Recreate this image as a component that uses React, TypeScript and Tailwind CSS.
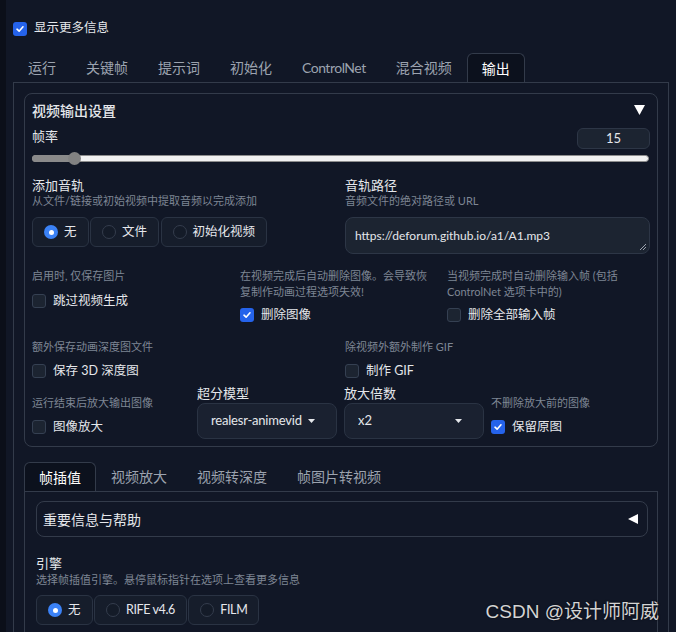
import React from "react";

const BORDER = "border-[#333b4a]";

function Check({ checked, label }: { checked?: boolean; label: string }) {
  return (
    <div className="flex items-center gap-[7px] h-[18px]">
      {checked ? (
        <span className="w-[14px] h-[14px] rounded-[3px] bg-[#2563eb] flex items-center justify-center">
          <svg width="10" height="10" viewBox="0 0 10 10">
            <path d="M2 5.2 L4.1 7.2 L8 2.8" fill="none" stroke="white" strokeWidth="1.6" strokeLinecap="round" strokeLinejoin="round" />
          </svg>
        </span>
      ) : (
        <span className="w-[14px] h-[14px] rounded-[3px] bg-[#1c2431] border border-[#354052]" />
      )}
      <span className="text-[12.5px] leading-[18px] text-[#e5e7eb]">{label}</span>
    </div>
  );
}

function Radios({ options, selected }: { options: string[]; selected: string }) {
  return (
    <div className="flex gap-[1.5px]">
      {options.map((o) => (
        <div
          key={o}
          className="h-[30px] flex items-center gap-[6px] px-[11px] rounded-md border border-[#2a3343] bg-[#161d2b]"
        >
          {o === selected ? (
            <span className="w-[14px] h-[14px] rounded-full bg-[#3b82f6] flex items-center justify-center">
              <span className="w-[5px] h-[5px] rounded-full bg-white" />
            </span>
          ) : (
            <span className="w-[14px] h-[14px] rounded-full bg-[#141b28] border border-[#343d4d]" />
          )}
          <span className={`text-[12.5px] text-[#e5e7eb] ${/[A-Za-z]/.test(o) ? "tracking-[-0.4px]" : ""}`}>{o}</span>
        </div>
      ))}
    </div>
  );
}

function Tabs({ items, active }: { items: string[]; active: string }) {
  return (
    <div className="flex">
      {items.map((t) =>
        t === active ? (
          <div
            key={t}
            className={`relative z-10 -mb-px h-[29px] px-[14px] flex items-center text-[14px] text-white bg-[#0c111d] border border-b-0 ${BORDER} rounded-t-md`}
          >
            {t}
          </div>
        ) : (
          <div
            key={t}
            className={`h-[29px] px-[14px] flex items-center text-[14px] text-[#9ca3af] border border-transparent ${
              t === "ControlNet" ? "tracking-[-0.5px]" : ""
            }`}
          >
            {t}
          </div>
        )
      )}
    </div>
  );
}

function Info({ children }: { children: React.ReactNode }) {
  return <div className="text-[11px] leading-[16px] text-[#7e8694]">{children}</div>;
}

function Label({ children }: { children: React.ReactNode }) {
  return <div className="text-[13px] leading-[16px] text-[#e5e7eb]">{children}</div>;
}

function Caret() {
  return (
    <svg width="7" height="4" viewBox="0 0 7 4">
      <path d="M0 0 L7 0 L3.5 4 Z" fill="#e5e7eb" />
    </svg>
  );
}

function Dropdown({ value, clip }: { value: string; clip?: boolean }) {
  return (
    <div className="mt-px h-[36px] rounded-lg border border-[#2a3343] bg-[#1a2130] flex items-center justify-between pl-[13px] pr-[21px]">
      <span className={`text-[13px] text-[#e5e7eb] whitespace-nowrap overflow-hidden ${clip ? "w-[91px] tracking-[-0.2px]" : ""}`}>{value}</span>
      <Caret />
    </div>
  );
}

export default function App() {
  return (
    <div className="relative w-full h-[632px] overflow-hidden bg-[#111726] border-l-[6px] border-[#0b0f19] px-[7px] pt-[21px] font-['Lato','Noto_Sans_CJK_SC',sans-serif]">
      <div className="flex items-center gap-[7px] h-[15px]">
        <span className="w-[14px] h-[14px] rounded-[3px] bg-[#2563eb] flex items-center justify-center">
          <svg width="10" height="10" viewBox="0 0 10 10">
            <path d="M2 5.2 L4.1 7.2 L8 2.8" fill="none" stroke="white" strokeWidth="1.6" strokeLinecap="round" strokeLinejoin="round" />
          </svg>
        </span>
        <span className="text-[12.5px] text-[#e5e7eb]">显示更多信息</span>
      </div>

      <div className="mt-[17px]">
        <Tabs items={["运行", "关键帧", "提示词", "初始化", "ControlNet", "混合视频", "输出"]} active="输出" />
      </div>

      <div className={`border ${BORDER} p-[10px]`}>
        {/* 视频输出设置 */}
        <div className={`rounded-lg border ${BORDER} px-[7px] pt-[6px] pb-[7px]`}>
          <div className="flex items-center justify-between h-[20px]">
            <span className="text-[14px] font-medium text-[#e5e7eb]">视频输出设置</span>
            <svg width="11" height="10" viewBox="0 0 11 10" className="mr-[5px]">
              <path d="M0 0 L11 0 L5.5 10 Z" fill="white" />
            </svg>
          </div>

          <div className="mt-[7px] flex justify-between items-start">
            <span className="text-[13px] leading-[18px] text-[#e5e7eb]">帧率</span>
            <div className="mt-px w-[73px] h-[21px] rounded-md bg-[#1c2431] border border-[#2d3646] text-center text-[13px] leading-[19px] text-[#e5e7eb]">
              15
            </div>
          </div>

          <div className="relative mt-[6px] h-[7px] mr-px">
            <div className="absolute inset-0 rounded-full bg-[#f1f1f1] border border-[#8d8d8d]" />
            <div className="absolute left-0 top-0 h-full w-[42px] rounded-l-full bg-[#8a8a8a]" />
            <div className="absolute left-[36px] top-[-3px] w-[13px] h-[13px] rounded-full bg-[#828282]" />
          </div>

          <div className="mt-[15px] grid grid-cols-2 gap-x-[8px]">
            <div>
              <Label>添加音轨</Label>
              <Info>从文件/链接或初始视频中提取音频以完成添加</Info>
              <div className="mt-[8px]">
                <Radios options={["无", "文件", "初始化视频"]} selected="无" />
              </div>
            </div>
            <div>
              <Label>音轨路径</Label>
              <Info>音频文件的绝对路径或 URL</Info>
              <div className="relative mt-[8px] h-[37px] rounded-lg bg-[#1c2431] border border-[#2d3646] px-[9px] text-[12px] leading-[35px] text-[#e5e7eb]">
                https://deforum.github.io/a1/A1.mp3
                <svg width="6" height="6" viewBox="0 0 6 6" className="absolute right-[3px] bottom-[3px]">
                  <path d="M6 0 L0 6 M6 3 L3 6" stroke="#9ca3af" strokeWidth="1" />
                </svg>
              </div>
            </div>
          </div>

          <div className="mt-[14px] grid grid-cols-[198px_197px_1fr] gap-x-[10px]">
            <div>
              <Info>启用时, 仅保存图片</Info>
              <div className="mt-[8px]">
                <Check label="跳过视频生成" />
              </div>
            </div>
            <div>
              <Info>在视频完成后自动删除图像。会导致恢复制作动画过程选项失效!</Info>
              <div className="mt-[6px]">
                <Check checked label="删除图像" />
              </div>
            </div>
            <div>
              <Info>当视频完成时自动删除输入帧 (包括 ControlNet 选项卡中的)</Info>
              <div className="mt-[6px]">
                <Check label="删除全部输入帧" />
              </div>
            </div>
          </div>

          <div className="mt-[15px] grid grid-cols-2 gap-x-[8px]">
            <div>
              <Info>额外保存动画深度图文件</Info>
              <div className="mt-[7px]">
                <Check label="保存 3D 深度图" />
              </div>
            </div>
            <div>
              <Info>除视频外额外制作 GIF</Info>
              <div className="mt-[7px]">
                <Check label="制作 GIF" />
              </div>
            </div>
          </div>

          <div className="mt-[4px] grid grid-cols-[158px_140px_140px_1fr] gap-x-[7px] items-start">
            <div className="pt-[11px]">
              <Info>运行结束后放大输出图像</Info>
              <div className="mt-[7px]">
                <Check label="图像放大" />
              </div>
            </div>
            <div>
              <div className="text-[13px] leading-[18px] text-[#e5e7eb]">超分模型</div>
              <Dropdown value="realesr-animevideov3" clip />
            </div>
            <div>
              <div className="text-[13px] leading-[18px] text-[#e5e7eb]">放大倍数</div>
              <Dropdown value="x2" />
            </div>
            <div className="pt-[11px]">
              <Info>不删除放大前的图像</Info>
              <div className="mt-[7px]">
                <Check checked label="保留原图" />
              </div>
            </div>
          </div>
        </div>

        {/* 帧插值 tabs */}
        <div className="mt-[15px]">
          <Tabs items={["帧插值", "视频放大", "视频转深度", "帧图片转视频"]} active="帧插值" />
        </div>
        <div className={`border ${BORDER} pt-[9px] pl-[11px] pr-[9px] pb-[12px]`}>
          <div className={`h-[36px] rounded-lg border ${BORDER} flex items-center justify-between pl-[6px] pr-[9px]`}>
            <span className="text-[14px] text-[#e5e7eb]">重要信息与帮助</span>
            <svg width="10" height="10" viewBox="0 0 10 10">
              <path d="M10 0 L10 10 L0 5 Z" fill="white" />
            </svg>
          </div>
          <div className="mt-[17px]">
            <div className="text-[13px] leading-[18px] text-[#e5e7eb]">引擎</div>
            <Info>选择帧插值引擎。悬停鼠标指针在选项上查看更多信息</Info>
            <div className="mt-[7px]">
              <Radios options={["无", "RIFE v4.6", "FILM"]} selected="无" />
            </div>
          </div>
        </div>
      </div>

      <div className="absolute right-[17px] bottom-[10px] text-[19px] leading-[20px] text-[#d4d4d4] font-['Liberation_Sans','Noto_Sans_CJK_SC',sans-serif] [text-shadow:0_0_2px_rgba(0,0,0,0.7)]">
        CSDN @设计师阿威
      </div>
    </div>
  );
}
